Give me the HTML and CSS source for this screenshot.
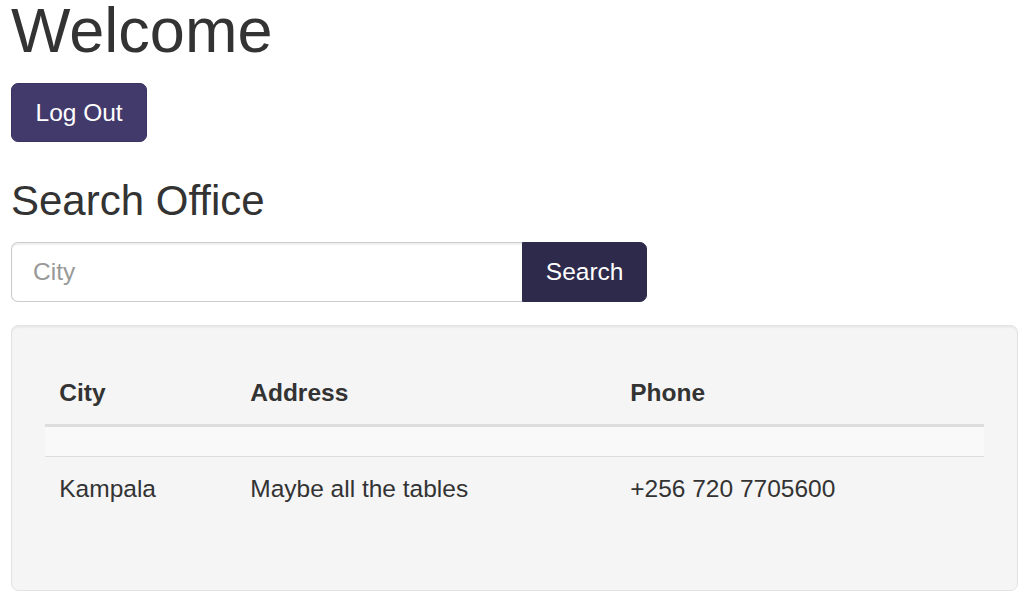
FILE: index.html
```html
<!DOCTYPE html>
<html lang="en">
<head>
<meta charset="utf-8">
<title>Welcome</title>
<link rel="stylesheet" href="styles.css">
</head>
<body>
<div class="page">
  <h1 class="title">Welcome</h1>
  <button class="btn btn-logout" type="button">Log Out</button>
  <h3 class="subtitle">Search Office</h3>
  <form class="search">
    <input class="search-input" type="text" placeholder="City">
    <button class="btn btn-search" type="button">Search</button>
  </form>
  <div class="well">
    <table class="offices">
      <thead>
        <tr><th class="col-city">City</th><th class="col-address">Address</th><th>Phone</th></tr>
      </thead>
      <tbody>
        <tr class="empty"><td></td><td></td><td></td></tr>
        <tr><td>Kampala</td><td>Maybe all the tables</td><td>+256 720 7705600</td></tr>
      </tbody>
    </table>
  </div>
</div>
</body>
</html>
```
FILE: styles.css
```css
* { box-sizing: border-box; }
html, body { margin: 0; padding: 0; background: #fff; }
body {
  font-family: "Liberation Sans", Arial, sans-serif;
  font-size: 24.5px;
  line-height: 35px;
  color: #333;
}
.page { padding: 0 6px 0 11px; }
.title {
  font-size: 63px;
  line-height: 69.3px;
  font-weight: 500;
  margin: -4px 0 17.5px;
}
.btn {
  font-family: inherit;
  font-size: 24.5px;
  line-height: 35px;
  height: 59.5px;
  padding: 10.5px 21px;
  color: #fff;
  border: 1.75px solid transparent;
  border-radius: 7px;
  cursor: pointer;
  display: inline-block;
  vertical-align: top;
}
.btn-logout {
  background: #433a6c;
  border-color: #3a325f;
  padding: 10.5px 23.5px;
}
.subtitle {
  font-size: 42px;
  line-height: 46.2px;
  font-weight: 500;
  margin: 36px 0 17.5px;
}
.search {
  display: flex;
  width: 636px;
  margin: 0 0 23.5px;
}
.search-input {
  flex: 1;
  height: 59.5px;
  font-family: inherit;
  font-size: 24.5px;
  padding: 10.5px 21px;
  border: 1.75px solid #ccc;
  border-right: 0;
  border-radius: 7px 0 0 7px;
  color: #555;
  box-shadow: inset 0 1.75px 1.75px rgba(0,0,0,.075);
  outline: none;
}
.search-input::placeholder { color: #999; }
.btn-search {
  background: #2e2a4b;
  border-color: #2e2a4b;
  border-radius: 0 7px 7px 0;
  padding: 10.5px 22.5px;
}
.well {
  width: 1007px;
  background: #f5f5f5;
  border: 1.75px solid #e3e3e3;
  border-radius: 7px;
  padding: 33.25px;
  box-shadow: inset 0 1.75px 1.75px rgba(0,0,0,.05);
}
.offices {
  width: 100%;
  border-collapse: collapse;
  border-spacing: 0;
  margin-bottom: 36px;
}
.offices th, .offices td {
  text-align: left;
  padding: 14px;
  vertical-align: top;
}
.offices th {
  font-weight: bold;
  padding-top: 16px;
  border-bottom: 3.5px solid #ddd;
}
.col-city { width: 191px; }
.col-address { width: 380px; }
.offices td { border-top: 1.75px solid #ddd; }
.offices .empty td {
  background: #f9f9f9;
  height: 31px;
  padding: 0;
  border-top: 0;
}
```
